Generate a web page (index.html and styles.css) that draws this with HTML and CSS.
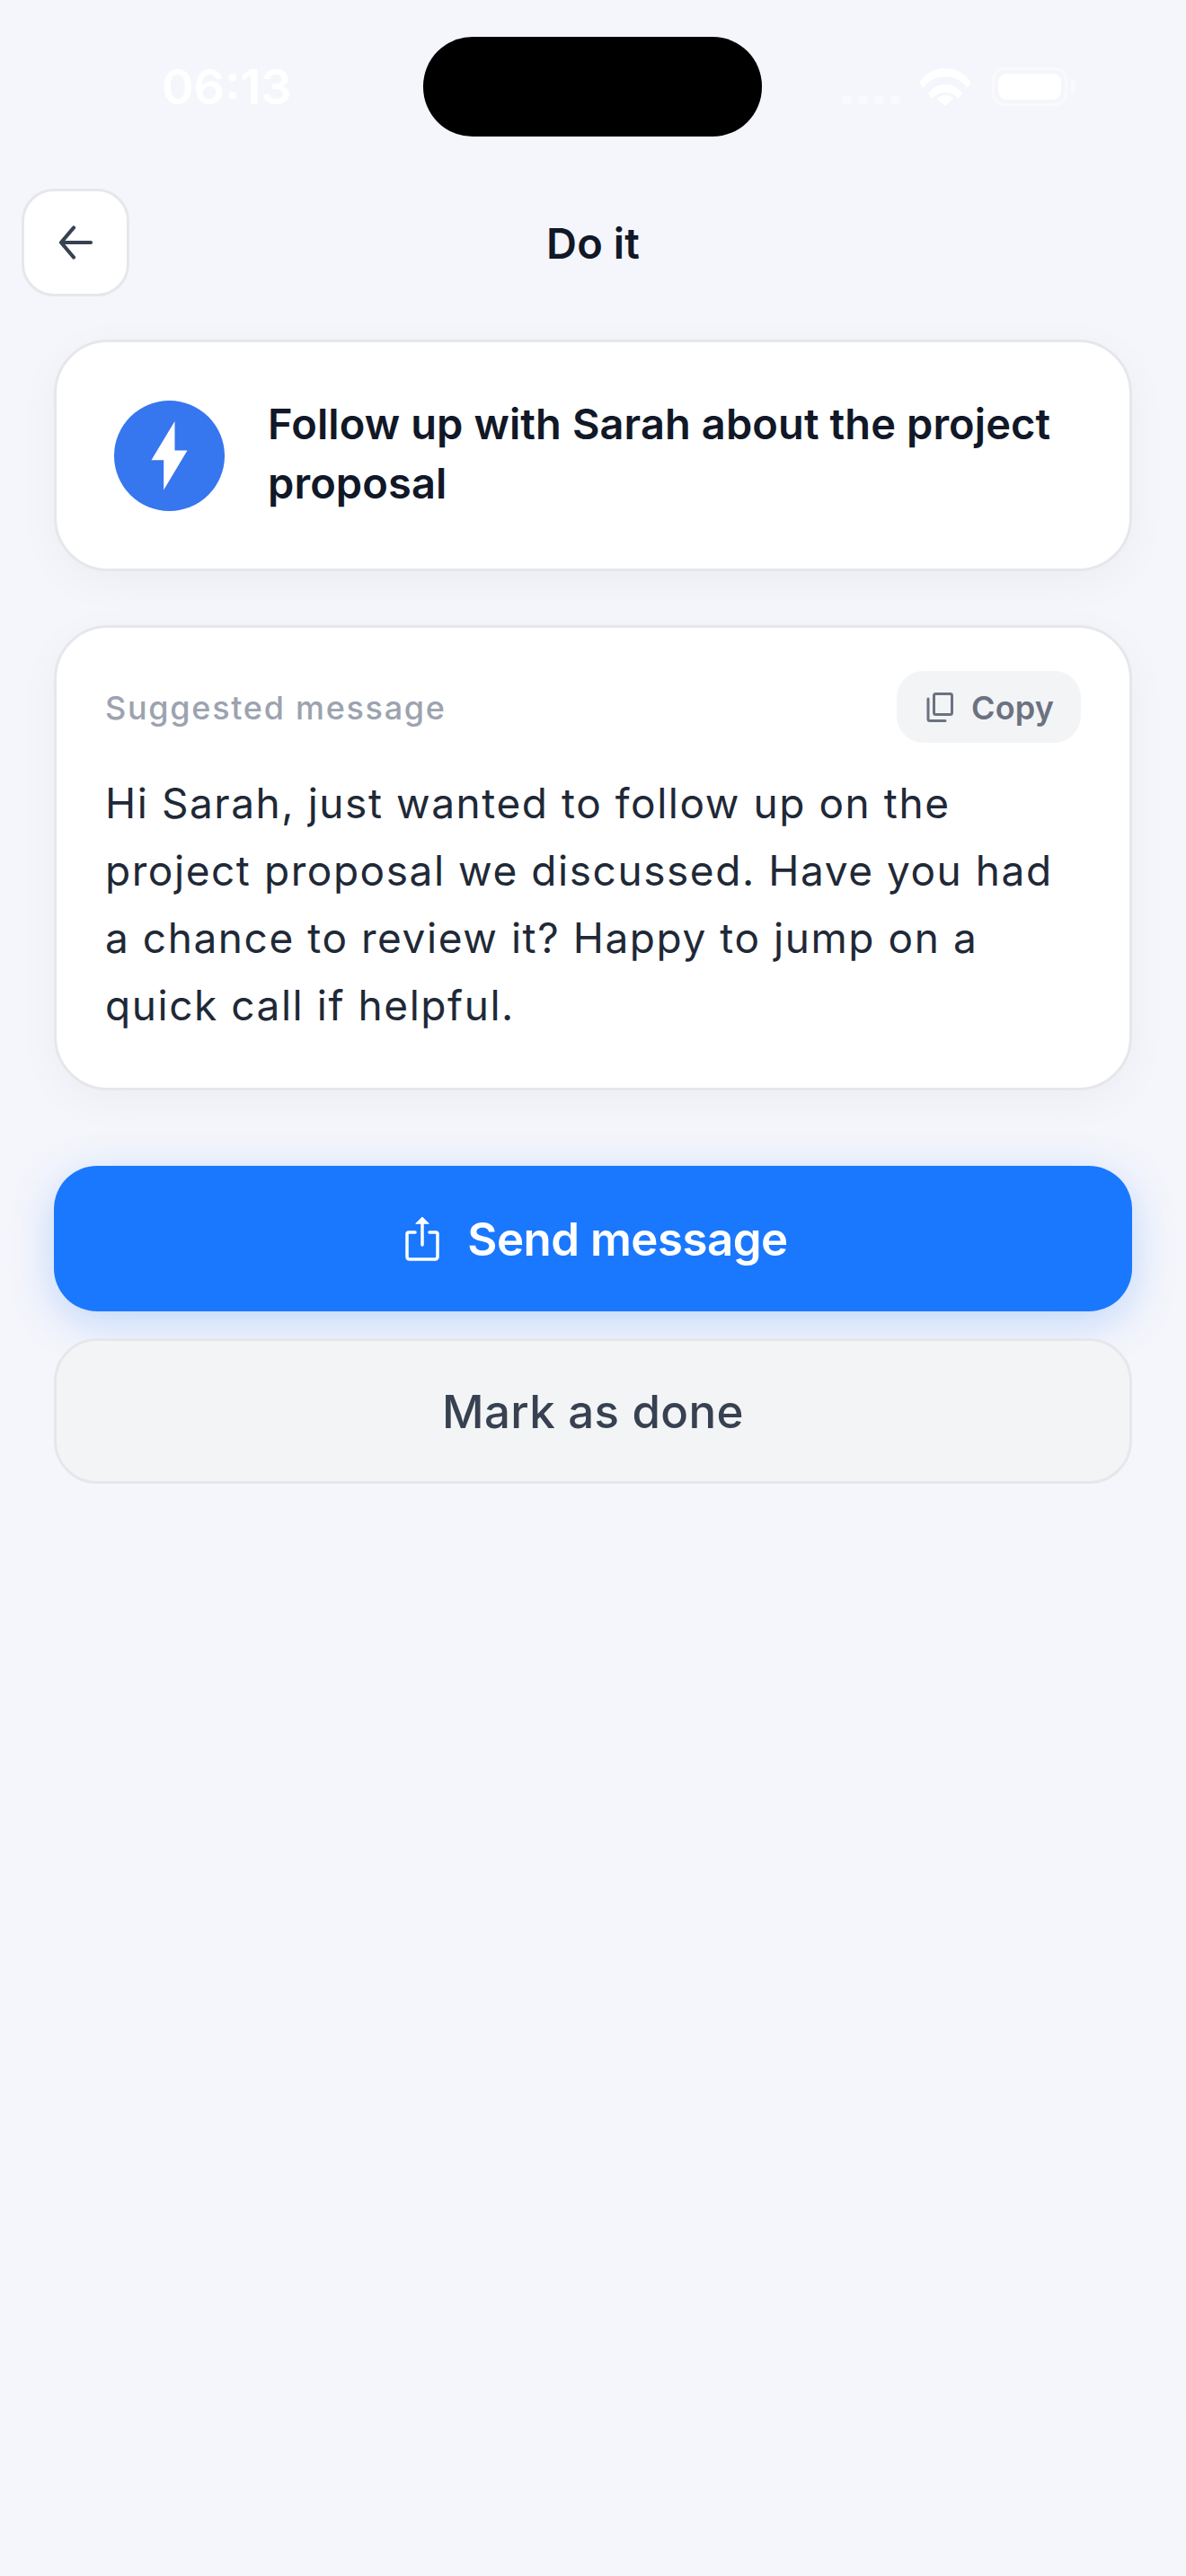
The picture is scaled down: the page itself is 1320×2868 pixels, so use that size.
FILE: index.html
```html
<!DOCTYPE html>
<html lang="en">
<head>
<meta charset="utf-8">
<title>Do it</title>
<link rel="stylesheet" href="styles.css">
</head>
<body>
<div class="screen">
  <div class="status">
    <div class="time">06:13</div>
    <div class="island"></div>
    <div class="status-icons">
      <div class="dots"><span class="dot"></span><span class="dot"></span><span class="dot"></span><span class="dot"></span></div>
      <svg class="wifi" width="58" height="42" viewBox="0 0 58 42"><path d="M29 0C18 0 8 4.500 0 16L4.500 22C11 12.500 19 9.500 29 9.500S47 12.500 53.500 22L58 16C50 4.500 40 0 29 0Z" fill="#fff"/><path d="M29 18C21.500 18 15.500 21 10 28L14.500 34C18.500 29 23 27 29 27S39.500 29 43.500 34L48 28C42.500 21 36.500 18 29 18Z" fill="#fff"/><path d="M29 30C25 30 22 31 20 34L29 42L38 34C36 31 33 30 29 30Z" fill="#fff"/></svg>
      <div class="battery"><div class="battery-fill"></div></div>
      <div class="battery-tip"></div>
    </div>
  </div>

  <header class="topbar">
    <button class="back" type="button" aria-label="Back">
      <svg width="42" height="42" viewBox="0 0 42 42" fill="none" stroke="#374151" stroke-width="4.200" stroke-linecap="round" stroke-linejoin="round"><path d="M38 21H5M19 4.500L5 21L19 37.500"/></svg>
    </button>
    <h1 class="title">Do it</h1>
    <div class="spacer"></div>
  </header>

  <main class="content">
    <section class="card task">
      <svg class="bolt" width="123" height="123" viewBox="0 0 123 123"><circle cx="61.500" cy="61.500" r="61.500" fill="#3676ee"/><path d="M67.500 23V55.500H81.500L55.200 99.500V66.200H41.500Z" fill="#fff"/></svg>
      <p class="task-text">Follow up with Sarah about the project proposal</p>
    </section>

    <section class="card message">
      <div class="message-head">
        <span class="label">Suggested message</span>
        <button class="copy" type="button">
          <svg width="30" height="33" viewBox="0 0 30 33" fill="none" stroke="#6b7280" stroke-width="3"><rect x="8.500" y="1.500" width="20" height="23" rx="2"/><path d="M2 7V29.500Q2 31.500 4 31.500H21" stroke-linecap="round"/></svg>
          <span>Copy</span>
        </button>
      </div>
      <p class="body-text">Hi Sarah, just wanted to follow up on the project proposal we discussed. Have you had a chance to review it? Happy to jump on a quick call if helpful.</p>
    </section>

    <div class="actions">
      <button class="btn primary" type="button">
        <svg width="38" height="50" viewBox="0 0 38 50" fill="none" stroke="#fff" stroke-width="3.500" stroke-linecap="round" stroke-linejoin="round"><path d="M11 18H4Q2 18 2 20V45Q2 48 5 48H33Q36 48 36 45V20Q36 18 34 18H27"/><path d="M19 7V32"/><path d="M12 8L19 1L26 8Z" fill="#fff" stroke-width="1"/></svg>
        <span>Send message</span>
      </button>
      <button class="btn secondary" type="button">Mark as done</button>
    </div>
  </main>
</div>
</body>
</html>
```

FILE: styles.css
```css
* {
  box-sizing: border-box;
}

html,
body {
  margin: 0;
  padding: 0;
}

body {
  background: #f5f6fb;
  font-family: Inter, "Liberation Sans", sans-serif;
}

.screen {
  width: 1320px;
  height: 2868px;
  overflow: hidden;
}

.status {
  display: flex;
  align-items: center;
  height: 210px;
  padding: 41px 0 58px 180px;
}

.time {
  width: 291px;
  color: #fff;
  font-size: 54px;
  font-weight: 600;
  line-height: 1;
}

.island {
  width: 377px;
  height: 111px;
  border-radius: 55px;
  background: #000;
}

.status-icons {
  display: flex;
  align-items: center;
  height: 111px;
  margin-left: 89px;
}

.dots {
  display: flex;
  gap: 7px;
  align-self: flex-end;
  margin: 0 21px 35px 0;
}

.dot {
  width: 11px;
  height: 11px;
  border-radius: 50%;
  background: #f9fafc;
}

.wifi {
  margin-right: 23px;
}

.battery {
  width: 84px;
  height: 43px;
  padding: 4px;
  border: 3px solid #f9fafc;
  border-radius: 14px;
}

.battery-fill {
  height: 100%;
  border-radius: 9px;
  background: #fff;
}

.battery-tip {
  width: 5px;
  height: 15px;
  margin-left: 4px;
  border-radius: 0 4px 4px 0;
  background: #f9fafc;
}

.topbar {
  display: flex;
  align-items: center;
  height: 120px;
  padding: 0 24px;
}

.back {
  display: flex;
  flex: none;
  align-items: center;
  justify-content: center;
  width: 120px;
  height: 120px;
  padding: 0;
  border: 3px solid #e5e7eb;
  border-radius: 36px;
  background: #fff;
}

.title {
  flex: 1;
  margin: 0;
  padding-top: 1px;
  color: #111827;
  font-size: 47px;
  font-weight: 600;
  line-height: 66px;
  letter-spacing: 0.100px;
  text-align: center;
}

.spacer {
  flex: none;
  width: 120px;
}

.content {
  display: flex;
  flex-direction: column;
  gap: 60px;
  padding: 48px 60px 0;
}

.card {
  border: 3px solid #e5e7eb;
  border-radius: 60px;
  background: #fff;
  box-shadow: 0 12px 48px rgba(17, 24, 39, 0.04);
}

.task {
  display: flex;
  align-items: center;
  gap: 48px;
  padding: 60px 64px;
}

.bolt {
  flex: none;
}

.task-text {
  margin: -2px 0 2px;
  color: #111827;
  font-size: 47px;
  font-weight: 600;
  line-height: 66px;
  letter-spacing: 0.090px;
}

.message {
  padding: 48px 54px 54px;
}

.message-head {
  display: flex;
  align-items: center;
  justify-content: space-between;
  margin-bottom: 30px;
}

.label {
  padding-top: 2px;
  color: #9ca3af;
  font-size: 36px;
  font-weight: 500;
  letter-spacing: 1.700px;
}

.copy {
  display: flex;
  align-items: center;
  gap: 20px;
  width: 205px;
  height: 80px;
  padding: 2px 0 0 33px;
  border: 0;
  border-radius: 30px;
  background: #f3f4f6;
  color: #6b7280;
  font-family: inherit;
  font-size: 36px;
  font-weight: 600;
  letter-spacing: 0.200px;
}

.copy svg {
  margin-top: -2px;
}

.body-text {
  margin: 0;
  color: #1f2937;
  font-size: 46px;
  line-height: 75px;
  letter-spacing: 1.550px;
}

.actions {
  display: flex;
  flex-direction: column;
  gap: 30px;
  margin-top: 24px;
}

.btn {
  display: flex;
  align-items: center;
  justify-content: center;
  width: 100%;
  height: 162px;
  border-radius: 48px;
  font-family: inherit;
  font-size: 51px;
}

.primary {
  gap: 31px;
  padding-left: 14px;
  border: 0;
  background: #1a78ff;
  box-shadow: 0 12px 48px rgba(26, 120, 255, 0.25);
  color: #fff;
  font-weight: 600;
  letter-spacing: -0.530px;
}

.secondary {
  border: 3px solid #e5e7eb;
  background: #f3f4f6;
  color: #374151;
  font-weight: 500;
  letter-spacing: 0.400px;
}
```
